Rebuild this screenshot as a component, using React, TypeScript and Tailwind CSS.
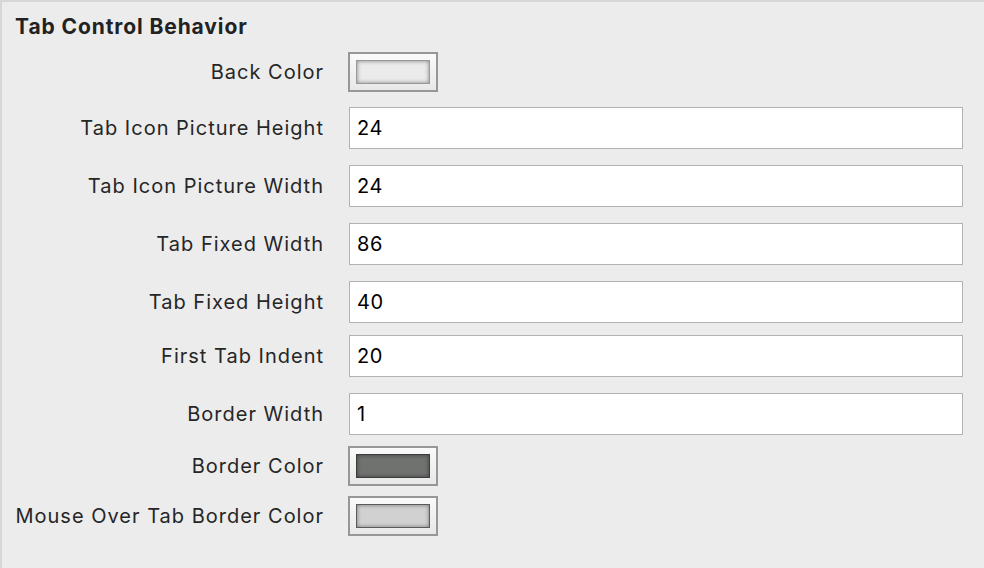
import React from 'react';

type Row =
    | { kind: 'color'; label: string; color: string; edge: string; mt: string }
    | { kind: 'input'; label: string; value: string; mt: string };

const rows: Row[] = [
    { kind: 'color', label: 'Back Color', color: '#ebebeb', edge: 'border-[#9a9a9a]', mt: 'mt-0' },
    { kind: 'input', label: 'Tab Icon Picture Height', value: '24', mt: 'mt-[15px]' },
    { kind: 'input', label: 'Tab Icon Picture Width', value: '24', mt: 'mt-[16px]' },
    { kind: 'input', label: 'Tab Fixed Width', value: '86', mt: 'mt-[16px]' },
    { kind: 'input', label: 'Tab Fixed Height', value: '40', mt: 'mt-[16px]' },
    { kind: 'input', label: 'First Tab Indent', value: '20', mt: 'mt-[12px]' },
    { kind: 'input', label: 'Border Width', value: '1', mt: 'mt-[16px]' },
    { kind: 'color', label: 'Border Color', color: '#707270', edge: 'border-[#3c3c3c]', mt: 'mt-[11px]' },
    { kind: 'color', label: 'Mouse Over Tab Border Color', color: '#d1d1d1', edge: 'border-[#5a5a5a]', mt: 'mt-[10px]' },
];

function Swatch({ color, edge }: { color: string; edge: string }) {
    return (
        <div className="ml-[24px] w-[90px] h-[40px] border-2 border-[#979797] bg-gradient-to-b from-[#fafafa] to-[#e8e8e8] flex items-center justify-center">
            <div
                className={`w-[74px] h-[24px] border ${edge} shadow-[inset_0_0_4px_rgba(0,0,0,0.45)]`}
                style={{ backgroundColor: color }}
            />
        </div>
    );
}

export default function App() {
    return (
        <div
            className="w-[984px] h-[568px] bg-[#ececec] border-t-2 border-l-2 border-[#d6d6d6] overflow-hidden"
            style={{ fontFamily: 'Inter, "Liberation Sans", sans-serif' }}
        >
            <div className="h-[50px] flex items-center pl-[13px]">
                <h1 className="text-[21px] font-bold tracking-[0.9px] text-[#222]">Tab Control Behavior</h1>
            </div>
            {rows.map((row) => (
                <div key={row.label} className={`flex items-center ${row.mt}`}>
                    <div className="w-[322px] text-right text-[20px] tracking-[1px] text-[#262626] leading-none">
                        {row.label}
                    </div>
                    {row.kind === 'color' ? (
                        <Swatch color={row.color} edge={row.edge} />
                    ) : (
                        <div className="ml-[25px] w-[614px] h-[42px] bg-white border border-[#b2b2b2] flex items-center pl-[7px] text-[20px] tracking-[0.6px] text-black">
                            {row.value}
                        </div>
                    )}
                </div>
            ))}
        </div>
    );
}
